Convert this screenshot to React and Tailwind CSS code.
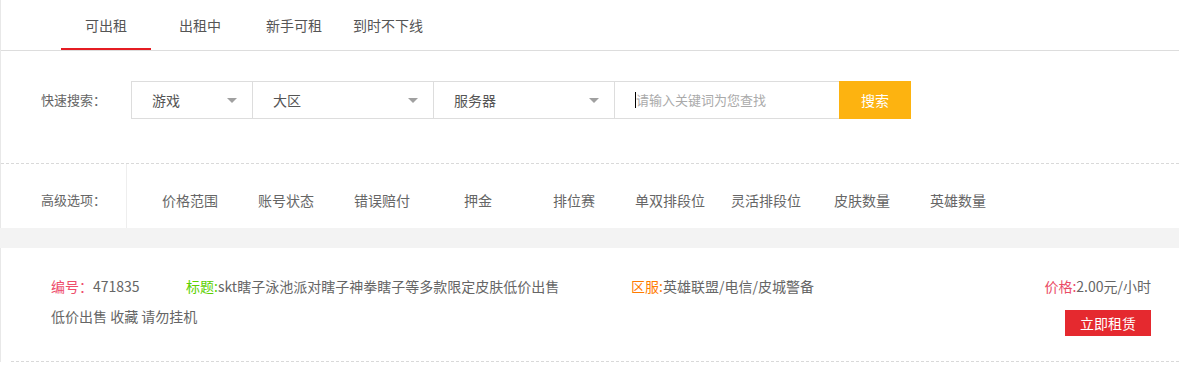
import { useState } from 'react'

const tabs = ['可出租', '出租中', '新手可租', '到时不下线']
const options = ['价格范围', '账号状态', '错误赔付', '押金', '排位赛', '单双排段位', '灵活排段位', '皮肤数量', '英雄数量']

function Select({ label, width }) {
  return (
    <div className={`${width} h-full flex items-center justify-between pl-[20px] pr-[15px] border-r border-[#ddd] text-[14px] text-[#555]`}>
      <span>{label}</span>
      <span className="w-0 h-0 border-l-[5px] border-r-[5px] border-t-[5px] border-l-transparent border-r-transparent border-t-[#a0a0a0]" />
    </div>
  )
}

export default function App() {
  const [active, setActive] = useState(0)

  return (
    <div className="w-[1179px] bg-white font-['Noto_Sans_CJK_SC','Noto_Sans',sans-serif] text-[#666]">
      <div className="border-l border-[#e8e8e8]">
        <div className="flex gap-[4px] pl-[60px] h-[51px] border-b border-[#ddd]">
          {tabs.map((t, i) => (
            <div
              key={t}
              onClick={() => setActive(i)}
              className={`w-[90px] h-[50px] flex items-center justify-center text-[14px] text-[#555] cursor-pointer ${
                i === active ? 'border-b-2 border-[#e51c23] pt-[2px]' : ''
              }`}
            >
              {t}
            </div>
          ))}
        </div>

        <div className="h-[112px] pt-[30px] pl-[40px] flex items-start">
          <div className="w-[90px] h-[38px] flex items-center text-[13px] text-[#666]">快速搜索：</div>
          <div className="flex h-[38px] border border-r-0 border-[#ddd]">
            <Select label="游戏" width="w-[121px]" />
            <Select label="大区" width="w-[181px]" />
            <Select label="服务器" width="w-[181px]" />
            <div className="w-[224px] h-full flex items-center pl-[20px]">
              <span className="w-px h-[16px] bg-black shrink-0" />
              <input
                placeholder="请输入关键词为您查找"
                className="w-full p-0 outline-none text-[13px] text-[#333] placeholder:text-[#aaa]"
              />
            </div>
          </div>
          <button className="w-[72px] h-[38px] bg-[#fdb310] text-white text-[14px]">搜索</button>
        </div>

        <div className="h-[65px] flex border-t border-dashed border-[#d9d9d9]">
          <div className="w-[126px] flex items-center pl-[40px] pt-[8px] border-r border-[#eee] text-[13px]">高级选项：</div>
          <div className="flex pl-[15px] pt-[8px] items-center">
            {options.map(o => (
              <div key={o} className="w-[96px] text-center text-[14px] text-[#666] cursor-pointer">{o}</div>
            ))}
          </div>
        </div>
      </div>

      <div className="h-[20px] bg-[#f3f3f3]" />

      <div className="border-l border-[#e8e8e8] h-[114px] pl-[10px]">
        <div className="h-[114px] border-b border-dashed border-[#d9d9d9] pl-[40px] pr-[28px] pt-[28px] flex justify-between text-[14px] leading-[20px]">
          <div>
            <div className="flex">
              <div className="w-[135px]">
                <span className="text-[#ee4d6c]">编号：</span>471835
              </div>
              <div className="w-[445px]">
                <span className="text-[#5dd000]">标题:</span>skt瞎子泳池派对瞎子神拳瞎子等多款限定皮肤低价出售
              </div>
              <div>
                <span className="text-[#ff7b00]">区服:</span>英雄联盟/电信/皮城警备
              </div>
            </div>
            <div className="mt-[10px]">低价出售 收藏 请勿挂机</div>
          </div>
          <div className="flex flex-col items-end">
            <div>
              <span className="text-[#ea4c66]">价格:</span>2.00元/小时
            </div>
            <button className="mt-[14px] w-[86px] h-[26px] bg-[#e5292f] text-white text-[14px]">立即租赁</button>
          </div>
        </div>
      </div>
    </div>
  )
}
